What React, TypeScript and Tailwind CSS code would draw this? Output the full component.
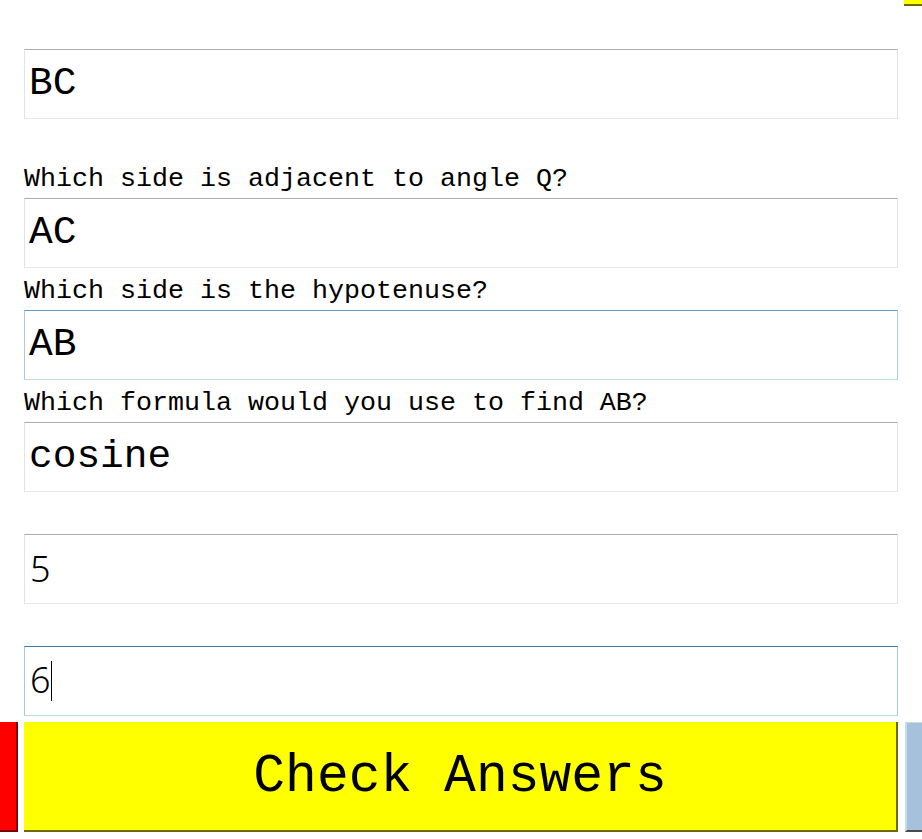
import React from 'react';

const mono = { fontFamily: '"Liberation Mono", "Courier New", monospace' };

const Field = ({ value, focus, hover, numeric, caret }: { value: string; focus?: boolean; hover?: boolean; numeric?: boolean; caret?: boolean }) => {
  const border = focus
    ? 'border-t-[#3d7bad] border-x-[#a4c9e3] border-b-[#b7d9ed]'
    : hover
    ? 'border-t-[#5a9bd0] border-x-[#a9cbe8] border-b-[#bcd9f0]'
    : 'border-t-[#abadb3] border-x-[#e2e3ea] border-b-[#e3e9ef]';
  return (
    <div className={`h-[70px] w-full border bg-white flex items-center pl-[4px] text-black ${border}`}>
      {numeric ? (
        <span className="text-[36px] font-light leading-none pl-[1px]" style={{ fontFamily: '"Noto Sans", "Open Sans", sans-serif' }}>
          {value}
          {caret && <span className="inline-block w-px h-[40px] bg-black align-[-8px]" />}
        </span>
      ) : (
        <span className="text-[39.5px] leading-none" style={mono}>{value}</span>
      )}
    </div>
  );
};

const Label = ({ text }: { text?: string }) => (
  <div className="h-[42px] text-[26.67px] leading-[46px] text-black whitespace-pre" style={mono}>
    {text}
  </div>
);

export default function App() {
  return (
    <div className="w-[922px] min-h-[839px] bg-white overflow-hidden">
      {/* tail of the row above, scrolled off */}
      <div className="flex justify-end">
        <div className="w-[18px] h-[6px] bg-[#ffff00] border-b-2 border-[#6b6b00]" />
      </div>

      <div className="px-6 pt-[43px]">
        <Field value="BC" />
        <div className="h-[37px]" />
        <Label text="Which side is adjacent to angle Q?" />
        <Field value="AC" />
        <Label text="Which side is the hypotenuse?" />
        <Field value="AB" hover />
        <Label text="Which formula would you use to find AB?" />
        <Field value="cosine" />
        <Label />
        <Field value="5" numeric />
        <Label />
        <Field value="6" numeric focus caret />
      </div>

      <div className="flex mt-[6px] h-[110px]">
        <div className="w-[18px] shrink-0 bg-[#ff0000] border-r-2 border-b-2 border-[#7a0000]" />
        <button
          className="ml-[6px] w-[874px] shrink-0 bg-[#ffff00] border-r-2 border-b-2 border-[#6b6b00] flex items-center justify-center pt-[4px] text-[53px] text-black"
          style={mono}
        >
          Check Answers
        </button>
        <div className="ml-[7px] w-[18px] shrink-0 bg-[#a5c1dc] border-l-2 border-t border-[#c4dcf0] border-b-2 border-b-[#4a4a4a]" />
      </div>
    </div>
  );
}
